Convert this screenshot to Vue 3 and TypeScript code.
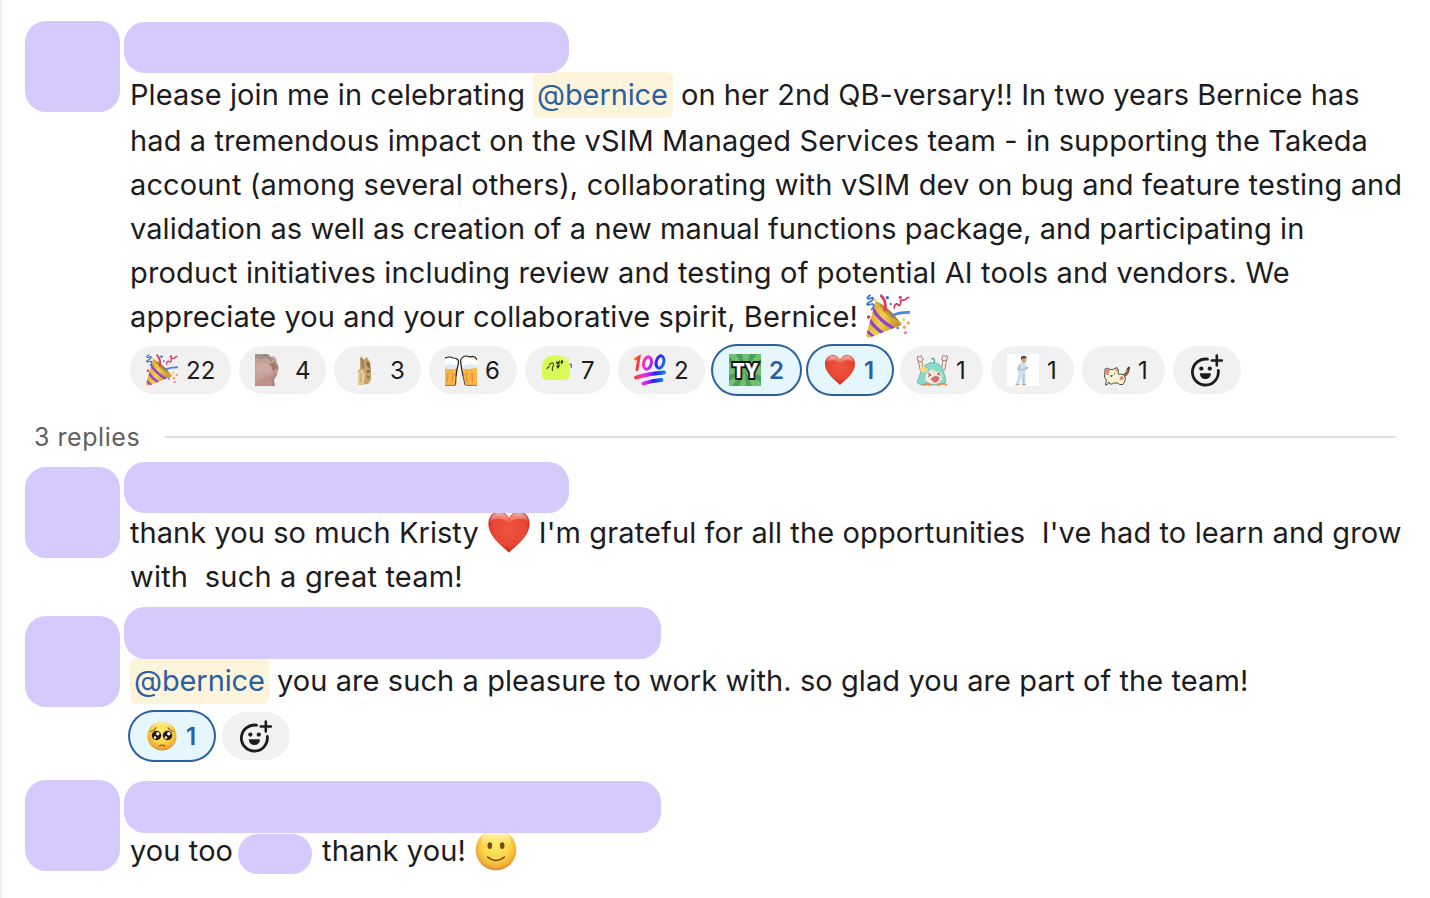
<script setup lang="ts">
interface Run {
  kind: 'words' | 'mention' | 'emoji' | 'pill'
  value: string
  spacing?: number
}
interface Reaction {
  icon: string
  count: number
  width: number
  mine?: boolean
}
interface Message {
  id: string
  lines: Run[][]
  reactions: Reaction[]
}

const words = (value: string, spacing: number): Run => ({ kind: 'words', value, spacing })
const mention = (value: string): Run => ({ kind: 'mention', value, spacing: -0.1 })
const emoji = (value: string): Run => ({ kind: 'emoji', value })
const pill: Run = { kind: 'pill', value: '' }

const messages: Message[] = [
  {
    id: 'root',
    lines: [
      [words('Please join me in celebrating', 0.08), mention('@bernice'), words('on her 2nd QB-versary!! In two years Bernice has', 0.06)],
      [words('had a tremendous impact on the vSIM Managed Services team - in supporting the Takeda', 0.107)],
      [words('account (among several others), collaborating with vSIM dev on bug and feature testing and', 0.133)],
      [words('validation as well as creation of a new manual functions package, and participating in', 0.07)],
      [words('product initiatives including review and testing of potential AI tools and vendors. We', 0.15)],
      [words('appreciate you and your collaborative spirit, Bernice!', 0.11), emoji('tada')],
    ],
    reactions: [
      { icon: 'tada', count: 22, width: 101 },
      { icon: 'fist', count: 4, width: 87 },
      { icon: 'bread', count: 3, width: 87 },
      { icon: 'beers', count: 6, width: 88 },
      { icon: 'blob', count: 7, width: 85 },
      { icon: 'hundred', count: 2, width: 87 },
      { icon: 'ty', count: 2, width: 87, mine: true },
      { icon: 'heart', count: 1, width: 84, mine: true },
      { icon: 'cheer', count: 1, width: 83 },
      { icon: 'walker', count: 1, width: 83 },
      { icon: 'cat', count: 1, width: 83 },
    ],
  },
  {
    id: 'first',
    lines: [
      [words('thank you so much Kristy', 0.06), emoji('heart'), words("I'm grateful for all the opportunities\u00a0 I've had to learn and grow", 0.12)],
      [words('with\u00a0 such a great team!', 0.19)],
    ],
    reactions: [],
  },
  {
    id: 'second',
    lines: [[mention('@bernice'), words('you are such a pleasure to work with. so glad you are part of the team!', 0.08)]],
    reactions: [{ icon: 'pleading', count: 1, width: 84, mine: true }],
  },
  {
    id: 'third',
    lines: [[words('you too', 0.1), pill, words('thank you!', 0.1), emoji('smile')]],
    reactions: [],
  },
]
</script>

<template>
  <main class="thread">
    <svg class="sprite" width="0" height="0" aria-hidden="true">
      <defs>
        <linearGradient id="gold" x1="0" y1="0.3" x2="1" y2="0.7">
          <stop offset="0" stop-color="#d9a02c" />
          <stop offset="0.45" stop-color="#f3cf4e" />
          <stop offset="1" stop-color="#b98722" />
        </linearGradient>
        <radialGradient id="heart-fill" cx="0.5" cy="0.42" r="0.62">
          <stop offset="0" stop-color="#ee5742" />
          <stop offset="0.65" stop-color="#e74632" />
          <stop offset="1" stop-color="#b52217" />
        </radialGradient>
        <linearGradient id="heart-shine" x1="0" y1="0" x2="0" y2="1">
          <stop offset="0" stop-color="#fff" stop-opacity="0.6" />
          <stop offset="1" stop-color="#fff" stop-opacity="0" />
        </linearGradient>
        <radialGradient id="face" cx="0.5" cy="0.4" r="0.62">
          <stop offset="0" stop-color="#fdec66" />
          <stop offset="0.55" stop-color="#f9d448" />
          <stop offset="0.85" stop-color="#f0a935" />
          <stop offset="1" stop-color="#cf7c28" />
        </radialGradient>
        <linearGradient id="face-shine" x1="0" y1="0" x2="0" y2="1">
          <stop offset="0" stop-color="#fffef0" stop-opacity="0.9" />
          <stop offset="1" stop-color="#fff36a" stop-opacity="0" />
        </linearGradient>
        <linearGradient id="rainbow" gradientUnits="userSpaceOnUse" x1="0" y1="0" x2="32" y2="6">
          <stop offset="0" stop-color="#ff9a2a" />
          <stop offset="0.16" stop-color="#f2402c" />
          <stop offset="0.42" stop-color="#f02ce8" />
          <stop offset="0.62" stop-color="#9b22f2" />
          <stop offset="0.75" stop-color="#1d22f5" />
          <stop offset="1" stop-color="#1878f0" />
        </linearGradient>
        <linearGradient id="skin" x1="0" y1="0" x2="0.6" y2="1">
          <stop offset="0" stop-color="#b3a099" />
          <stop offset="0.35" stop-color="#c5a099" />
          <stop offset="0.7" stop-color="#c79f98" />
          <stop offset="1" stop-color="#a48078" />
        </linearGradient>
        <clipPath id="cone"><path d="M28 24Q32 18 40 27L105 86Q108 92 101 95L10 131Q0 133 1 122Z" /></clipPath>
        <clipPath id="square"><rect width="32" height="32" /></clipPath>
      </defs>

      <symbol id="tada" viewBox="0 0 132 132">
        <path d="M28 24Q32 18 40 27L105 86Q108 92 101 95L10 131Q0 133 1 122Z" fill="url(#gold)" />
        <path d="M31 24C45 24 92 65 105 90C85 88 42 50 31 24Z" fill="#d5a838" />
        <path d="M40 28C56 34 84 58 98 82C78 73 52 50 40 28Z" fill="#b48528" />
        <g clip-path="url(#cone)" fill="none" stroke="#9145c9" stroke-width="10">
          <path d="M20 44Q38 78 84 104" />
          <path d="M10 76Q24 100 52 118" />
          <path d="M-4 104Q8 118 26 130" stroke-width="8" />
        </g>
        <path d="M57 51C60 36 58 16 43 3" fill="none" stroke="#e0395f" stroke-width="8" />
        <path d="M76 65Q102 54 132 55" fill="none" stroke="#4d87e6" stroke-width="8" />
        <path d="M14 3C-4 12 6 17 15 12S24 18 11 24S2 35 14 31S26 37 16 49" fill="none" stroke="#356fe0" stroke-width="5" />
        <path d="M85 44C84 31 92 26 96 32S106 30 104 22S114 21 118 17S122 10 130 10" fill="none" stroke="#d92c50" stroke-width="5" />
        <circle cx="64" cy="11" r="5" fill="#2f69dc" /><circle cx="74" cy="30" r="4" fill="#4b83e6" /><circle cx="103" cy="10" r="5" fill="#e04268" />
        <circle cx="8" cy="69" r="5" fill="#dc355d" /><circle cx="27" cy="18" r="4" fill="#f5c743" /><circle cx="113" cy="77" r="4" fill="#f5c743" />
        <circle cx="127" cy="87" r="5" fill="#f0a44d" /><circle cx="95" cy="102" r="4" fill="#4b83e6" /><circle cx="115" cy="100" r="5" fill="#f0a44d" />
        <circle cx="118" cy="116" r="5" fill="#ef86b0" />
      </symbol>

      <symbol id="heart" viewBox="0 0 32 32">
        <path d="M16 31C12 27 1 19.500 1 10C1 4.500 4.500 1 8.800 1C12.200 1 14.800 3 16 6C17.200 3 19.800 1 23.200 1C27.500 1 31 4.500 31 10C31 19.500 20 27 16 31Z" fill="url(#heart-fill)" />
        <path d="M2 9C2 4.500 5 1.800 8.800 1.800C12 1.800 14.500 3.500 16 7.500C17.500 3.500 20 1.800 23.200 1.800C27 1.800 30 4.500 30 9C27 5.500 20 5 16 10C12 5 5 5.500 2 9Z" fill="url(#heart-shine)" />
      </symbol>

      <symbol id="smile" viewBox="0 0 32 32">
        <circle cx="16" cy="16" r="14.800" fill="url(#face)" />
        <ellipse cx="16" cy="8.500" rx="11" ry="6.800" fill="url(#face-shine)" />
        <ellipse cx="11.500" cy="12.800" rx="1.700" ry="2.500" fill="#7b4a12" /><ellipse cx="20.500" cy="12.800" rx="1.700" ry="2.500" fill="#7b4a12" />
        <path d="M10 21.200Q16 26.200 22 21.200" fill="none" stroke="#7b4a12" stroke-width="1.200" stroke-linecap="round" />
      </symbol>

      <symbol id="pleading" viewBox="0 0 32 32">
        <circle cx="16" cy="16" r="14.600" fill="url(#face)" />
        <ellipse cx="16" cy="6.500" rx="10" ry="5" fill="url(#face-shine)" opacity="0.7" />
        <circle cx="10.500" cy="15.500" r="4.700" fill="#2a160c" /><circle cx="21.500" cy="15.500" r="4.700" fill="#2a160c" />
        <circle cx="11.800" cy="13.800" r="1.700" fill="#fff" /><circle cx="22.800" cy="13.800" r="1.700" fill="#fff" />
        <circle cx="9" cy="17.600" r="1.300" fill="#eee" /><circle cx="20" cy="17.600" r="1.300" fill="#eee" />
        <path d="M4.800 11.500Q8.500 10.500 10 7.800M27.200 11.500Q23.500 10.500 22 7.800M13.600 26Q16 24 18.400 26" fill="none" stroke="#84521a" stroke-width="1.200" stroke-linecap="round" />
      </symbol>

      <symbol id="fist" viewBox="0 0 32 32">
        <path d="M0 0H13L16 3L19 2L21 5L22 9L23.500 14L22 21L19 26L20 32H0Z" fill="url(#skin)" />
        <path d="M0 0H13L16 3L20 7L14 4L8 4L3 3L0 5Z" fill="#a19691" />
        <path d="M1 10Q10 6 15 12L17 17L14 21L8 18L2 22Z" fill="#d0aaa3" opacity="0.7" />
        <path d="M14 9Q17 13 18 17L22 14L20 7Q18 10 14 9Z" fill="#a87670" />
        <path d="M7 2L12 1.500M13 4L17 7M22 10L22.800 15M3 3.500L8 5" stroke="#77706d" stroke-width="0.800" />
        <path d="M0 28Q8 22 14 24L18 29L17 32H0Z" fill="#bd938a" />
      </symbol>

      <symbol id="bread" viewBox="0 0 32 32">
        <path d="M10 4L12 2L13 6L17 3L20 8L21 15V26L18 30L8 31V17L10 15Z" fill="#c5a269" />
        <path d="M8 18L13 15L15 21L14 30L8 31Z" fill="#e3c994" />
        <path d="M11 4L13 5L14 14L12.500 15Z" fill="#93794f" />
        <path d="M16 7L20 9V15L17 12ZM16 21L20 23L18 25Z" fill="#8e6d3f" />
        <path d="M17 17H20M18 17V19" stroke="#454a4e" stroke-width="1.200" />
        <path d="M11 19V29M16 25V30" stroke="#bd935a" stroke-width="0.800" />
      </symbol>

      <symbol id="beers" viewBox="0 0 32 32">
        <g clip-path="url(#square)">
          <path d="M0 5Q8 2 13 8L11 32H0Z" fill="#f9b548" />
          <path d="M32 5Q24 1 16 7L20 32H32Z" fill="#f9b548" />
          <path d="M0 5Q8 1 13 8L12 14Q6 16 0 14Z" fill="#fff" /><path d="M32 6Q24 1 16 7L17 14Q25 16 32 13Z" fill="#fff" />
          <path d="M0 11Q7 9 12 12V14Q6 16 0 14ZM17 12Q25 9 32 11V14L18 15Z" fill="#dcecf7" />
          <path d="M3 19L2 28M8 19L7 28M21 19L22 28M27 19L27.500 28" stroke="#e98f2c" stroke-width="1.400" />
          <path d="M0 4Q5 2 8 4Q14 4 13.500 9L12 15L11 22M32 6Q30 1 25 3Q19 0 15.500 6L16.500 14L18 22" fill="none" stroke="#222" stroke-width="1.200" />
          <path d="M11 22L10.500 31M18 22L20 31" stroke="#4a4b4d" stroke-width="1" />
          <path d="M0 31.400H10M21 31.400H32" stroke="#9c7034" stroke-width="0.900" />
        </g>
      </symbol>

      <symbol id="blob" viewBox="0 0 32 32">
        <path d="M1 15C1 6 6 1 14 1C21 1 26 4 28 10L29 20Q31 25 23 26H7Q0 26 1 21Z" fill="#d9fb58" />
        <path d="M6 15Q7 12 9 13M8 11Q13 6 12.500 12Q11 12 11.500 17" fill="none" stroke="#3b4919" stroke-width="1.200" />
        <path d="M15 7L17 8L19 6L18.500 10L16 11ZM15 12L19.500 10.500L17 15ZM19.500 7L22 6L22 9L20 10Z" fill="#29351a" />
        <path d="M28.500 10.500Q31.500 9 30 14" fill="none" stroke="#5a6143" stroke-width="1.100" />
        <circle cx="24.500" cy="3.500" r="1" fill="#daf55d" /><circle cx="27.500" cy="4.500" r="1" fill="#d2ef60" /><circle cx="27" cy="7" r="0.800" fill="#d2ef60" />
      </symbol>

      <symbol id="hundred" viewBox="0 0 32 32">
        <g fill="none" stroke="url(#rainbow)" stroke-linecap="round">
          <path d="M1.500 5L5 3L3 15.500" stroke-width="3" />
          <ellipse cx="13.500" cy="9" rx="3.800" ry="6.300" stroke-width="3" transform="rotate(14 13.500 9)" />
          <ellipse cx="26" cy="8" rx="3.800" ry="6.300" stroke-width="3" transform="rotate(14 26 8)" />
          <path d="M2 23.500Q15 19.500 30 18.500M9.500 29.500Q18 26.500 27.500 26" stroke-width="3.800" />
        </g>
      </symbol>

      <symbol id="ty" viewBox="0 0 32 32">
        <rect width="32" height="32" fill="#6fbf74" />
        <path d="M16 16L0 3V9ZM16 16L7 0H13ZM16 16L21 0H28ZM16 16L32 5V12ZM16 16L32 22V29ZM16 16L23 32H17ZM16 16L10 32H3ZM16 16L0 21V27Z" fill="#4da058" />
      </symbol>

      <symbol id="cheer" viewBox="0 0 32 32">
        <path d="M6 16L3.500 5M27 16L29 5" stroke="#8a6a5e" stroke-width="4.200" />
        <path d="M6 16L3.500 5M27 16L29 5" stroke="#f9e2d6" stroke-width="2.800" />
        <path d="M1 4L2 2L3.500 3L5 1.500L6 4L7.500 5L5 8L2 7ZM26 3L27.500 1L29 2.500L31 1.500L31.500 5L29 7L26 6Z" fill="#fae5da" stroke="#8a6a5e" stroke-width="0.800" />
        <path d="M18 9Q20 4 15 4.500" fill="none" stroke="#57a892" stroke-width="1.500" />
        <path d="M1 28Q4 22 5 17Q8 9 17 8.500Q26 9 28 19L30 28Q27 31 23 31H7Q3 31 1 28Z" fill="#86dbc8" stroke="#5fa093" stroke-width="0.700" />
        <path d="M10 20L16 15L21 18L25 17L26 25Q24 30 17 30Q10 29 9 25Z" fill="#fbe4d8" />
        <path d="M12 19.500L15 21L12 22.500M24.500 18L21.500 20L24.500 21" fill="none" stroke="#684b45" stroke-width="0.900" />
        <path d="M15 25Q19 21 23 23.500Q22 29 18 28Z" fill="#dc6c68" stroke="#a35b56" stroke-width="0.600" />
        <path d="M5 13L8 12L9.500 14L12.500 15L10 18L6 18.500L4 16Z" fill="#f8d670" />
        <path d="M7 31.500Q11 28 15 31.500M22 31.500Q26 28 31 31" fill="none" stroke="#ed8748" stroke-width="1.800" />
      </symbol>

      <symbol id="walker" viewBox="0 0 32 32">
        <rect width="32" height="32" fill="#fff" />
        <path d="M14 4L19 3.500L19.500 6L18 9L15.500 9L14 6Z" fill="#cda675" /><path d="M14 5.500V3Q18 0 20 4L15.500 4.500Z" fill="#5d4438" />
        <path d="M13 8.500L18 9L19.500 13L18 20L18.500 30H14.500L15 24L12 30H9L11.500 20L10 14Z" fill="#cbe1f3" />
        <path d="M13 11L11.500 16L18 15.500M17 20L16.500 29" fill="none" stroke="#9dbcd5" stroke-width="1" />
        <path d="M18 14.500L21 13.500M8.500 30.500H12.500M15 30.500H19" stroke="#bfa486" stroke-width="1.500" />
      </symbol>

      <symbol id="cat" viewBox="0 0 32 32">
        <path d="M24 22Q29.500 21 30 15.500L31 14" fill="none" stroke="#634338" stroke-width="2.800" stroke-linecap="round" /><path d="M24 22Q29 21 29.500 16" fill="none" stroke="#c2734d" stroke-width="1.300" />
        <path d="M7 15L9 14L12 15.500H15L19 13.500L20.500 17L20 20L25 20.500Q29 23 26.500 28L25 30.500H21.500L20 29H15.500L14 30H12L11 28L9 31H7.500L8.500 26L6.500 23Z" fill="#fbf1d3" stroke="#4b4037" stroke-width="0.900" />
        <path d="M7.500 15.500L9 15L12 16L11 19L7.500 21ZM17 16L19 14.500L20 18ZM22 23Q25.500 21 26 25Q23 27 21.500 25Z" fill="#d88a62" />
        <path d="M9.500 20.500H10.500M16 20H17M12.500 21.500L13.500 22.200L14.500 21.300" fill="none" stroke="#3d3732" stroke-width="1.100" />
      </symbol>

      <symbol id="add" viewBox="0 0 34 34">
        <path d="M17.500 5.200A13 13 0 1 0 28.300 16.500" fill="none" stroke="#1d1c1d" stroke-width="2.800" stroke-linecap="round" />
        <path d="M26.800 1.500V11.500M21.800 6.500H31.800" stroke="#1d1c1d" stroke-width="2.600" stroke-linecap="round" />
        <circle cx="11.300" cy="14.600" r="2.100" fill="#1d1c1d" /><circle cx="19.800" cy="14.600" r="2.100" fill="#1d1c1d" />
        <path d="M9.800 19.200H21Q20.500 25 15.400 25T9.800 19.200Z" fill="#1d1c1d" />
      </symbol>
    </svg>

    <template v-for="message in messages" :key="message.id">
      <article class="message" :class="message.id">
        <div class="avatar"></div>
        <div class="body">
          <div class="name-bar"></div>
          <div class="content">
            <div v-for="(line, l) in message.lines" :key="l" class="line">
              <template v-for="(run, r) in line" :key="r">
                <svg v-if="run.kind === 'emoji'" class="emoji" :class="run.value"><use :href="'#' + run.value" /></svg>
                <span v-else-if="run.kind === 'pill'" class="pill"></span>
                <span v-else :class="run.kind" :style="{ letterSpacing: run.spacing + 'px' }">{{ run.value }}</span>
              </template>
            </div>
          </div>
          <div v-if="message.reactions.length" class="reactions">
            <button
              v-for="reaction in message.reactions"
              :key="reaction.icon"
              type="button"
              class="chip"
              :class="{ mine: reaction.mine }"
              :style="{ width: reaction.width + 'px' }"
            >
              <svg class="chip-icon" viewBox="0 0 32 32">
                <use :href="'#' + reaction.icon" width="32" height="32" />
                <text v-if="reaction.icon === 'ty'" x="16.500" y="23.500" text-anchor="middle" textLength="26" lengthAdjust="spacingAndGlyphs" class="ty-text">TY</text>
              </svg>
              <span class="count">{{ reaction.count }}</span>
            </button>
            <button type="button" class="chip add" aria-label="Add reaction">
              <svg class="add-icon"><use href="#add" /></svg>
            </button>
          </div>
        </div>
      </article>
      <div v-if="message.id === 'root'" class="divider">
        <span>3 replies</span>
        <i></i>
      </div>
    </template>
  </main>
</template>

<style>
body {
  margin: 0;
  background: #fff;
}
</style>

<style scoped>
.thread {
  box-sizing: border-box;
  width: 1430px;
  height: 898px;
  padding: 21px 0 0 23px;
  border-left: 2px solid #efefef;
  overflow: hidden;
  background: #fff;
  color: #1d1c1d;
  font-family: Inter, "Liberation Sans", sans-serif;
}
.sprite {
  position: absolute;
}
.ty-text {
  font: 900 20px Inter, sans-serif;
  fill: #fff;
  stroke: #111;
  stroke-width: 4px;
  paint-order: stroke;
}
.message {
  display: grid;
  grid-template-columns: 95px 1fr;
  column-gap: 4px;
  align-items: start;
}
.avatar {
  height: 91px;
  border-radius: 21px;
  background: #d6cafc;
}
.name-bar {
  position: relative;
  z-index: 1;
  width: 445px;
  height: 51px;
  margin-bottom: -1px;
  border-radius: 21px;
  background: #d6cafc;
}
.content,
.reactions {
  margin-left: 6px;
}
.line {
  display: flex;
  align-items: center;
  gap: 8px;
  height: 44px;
  font-size: 29px;
  line-height: 44px;
  white-space: nowrap;
}
.root .words {
  line-height: 46px;
}
.root .line:not(:first-child) .words {
  padding-top: 1px;
}
.root .line:first-child,
.second .line {
  height: 46px;
}
.mention {
  box-sizing: border-box;
  width: 140px;
  height: 46px;
  padding-left: 4px;
  border-radius: 6px;
  background: #fdf4dc;
  color: #2a609f;
  line-height: 46px;
}
.second .mention {
  width: 139px;
}
.emoji {
  flex: none;
  width: 44px;
  height: 44px;
}
.emoji.heart,
.emoji.smile {
  margin-bottom: 2px;
}
.pill {
  width: 74px;
  height: 40px;
  margin: 6px 2px 0 -3px;
  border-radius: 20px;
  background: #d6cafc;
}
.reactions {
  display: flex;
  gap: 8px;
  margin-top: 8px;
}
.chip {
  box-sizing: border-box;
  display: flex;
  align-items: center;
  gap: 8px;
  height: 48px;
  padding: 0 0 0 16px;
  border: 0;
  border-radius: 24px;
  background: #f1f1f1;
  color: #1d1c1d;
  font: 400 24px/48px Inter, sans-serif;
}
.chip.mine {
  background: #e5f6fd;
  box-shadow: 0 0 0 2px #2a609f;
  color: #2a609f;
  font-weight: 600;
}
.chip.add {
  width: 68px;
  padding-left: 17px;
}
.count {
  padding-top: 2px;
}
.chip-icon {
  flex: none;
  width: 32px;
  height: 32px;
}
.add-icon {
  width: 34px;
  height: 34px;
  margin-top: 2px;
}
.divider {
  display: flex;
  align-items: center;
  gap: 25px;
  height: 30px;
  margin: 28px 34px 10px 9px;
  color: #616061;
  font-size: 25px;
  letter-spacing: 0.55px;
}
.divider i {
  flex: 1;
  height: 2px;
  background: #dfdfdf;
}
.root .body {
  margin-top: 1px;
}
.first .avatar {
  margin-top: 5px;
}
.first .name-bar {
  margin-bottom: -2px;
}
.second {
  margin-top: 8px;
}
.second .avatar {
  margin-top: 9px;
}
.second .name-bar,
.third .name-bar {
  width: 537px;
  height: 52px;
}
.third {
  margin-top: 20px;
}
.third .body {
  margin-top: 1px;
}
.third .name-bar {
  margin-bottom: -4px;
}
</style>
